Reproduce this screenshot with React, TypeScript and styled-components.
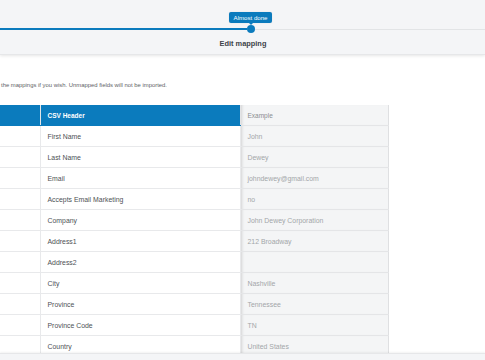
import React from 'react';
import styled, { createGlobalStyle } from 'styled-components';

const GlobalStyle = createGlobalStyle`
  html, body {
    margin: 0;
    padding: 0;
    background: #ffffff;
    font-family: "Liberation Sans", Arial, sans-serif;
    overflow: hidden;
  }
`;

const Page = styled.div`
  width: 485px;
  height: 360px;
  position: relative;
  overflow: hidden;
`;

const Header = styled.header`
  height: 55px;
  background: #f4f5f7;
  box-shadow: 0 1px 3px rgba(0, 0, 0, 0.1);
  border-bottom: 1px solid #e6e7e9;
  box-sizing: border-box;
  display: flex;
  flex-direction: column;
  padding-top: 25px;
`;

const Track = styled.div`
  position: relative;
  display: flex;
  align-items: center;
  height: 8px;
`;

const DoneLine = styled.div`
  width: 247px;
  height: 2px;
  background: #0b7bbd;
`;

const Dot = styled.div`
  width: 8px;
  height: 8px;
  border-radius: 50%;
  background: #0b7bbd;
  flex-shrink: 0;
`;

const TodoLine = styled.div`
  flex: 1;
  height: 1px;
  background: #e2e4e6;
`;

const Tooltip = styled.div`
  position: absolute;
  left: 229px;
  bottom: 10px;
  width: 43px;
  height: 11px;
  border-radius: 2px;
  background: #0b7bbd;
  color: #ffffff;
  font-size: 6.1px;
  line-height: 11px;
  text-align: center;
  box-shadow: 0 0 1px rgba(0, 0, 0, 0.2);

  &::after {
    content: '';
    position: absolute;
    left: 50%;
    bottom: -2px;
    margin-left: -2px;
    border-left: 2px solid transparent;
    border-right: 2px solid transparent;
    border-top: 2px solid #0b7bbd;
  }
`;

const Title = styled.div`
  margin-top: 6px;
  text-align: center;
  font-size: 7.4px;
  font-weight: 700;
  color: #3d4349;
  padding-left: 1px;
`;

const Content = styled.main`
  padding-top: 26px;
`;

const Note = styled.p`
  margin: 0 0 16px 1px;
  font-size: 5.9px;
  line-height: 8px;
  color: #5e6266;
`;

const Table = styled.table`
  border-collapse: collapse;
  table-layout: fixed;
  width: 388px;
`;

const HeadCell = styled.th<{ $example?: boolean }>`
  height: 20px;
  padding: 0 0 0 7px;
  text-align: left;
  font-size: 6.5px;
  font-weight: ${(p) => (p.$example ? 400 : 700)};
  color: ${(p) => (p.$example ? '#8a8d90' : '#ffffff')};
  background: ${(p) => (p.$example ? '#f4f5f6' : '#0b7bbd')};
  border-bottom: 1px solid ${(p) => (p.$example ? '#e4e5e7' : '#0b7bbd')};
  border-right: 1px solid ${(p) => (p.$example ? '#dfe0e2' : '#e3e4e6')};
  box-shadow: ${(p) => (p.$example ? 'inset 3px 0 3px -2px rgba(0,0,0,0.14)' : 'none')};
`;

const Cell = styled.td<{ $example?: boolean }>`
  height: 20px;
  padding: 0 0 0 7px;
  font-size: 6.9px;
  color: ${(p) => (p.$example ? '#a3a6a9' : '#4d5155')};
  background: ${(p) => (p.$example ? '#f4f5f6' : '#ffffff')};
  border-bottom: 1px solid ${(p) => (p.$example ? '#e4e5e7' : '#e8e9eb')};
  border-right: 1px solid ${(p) => (p.$example ? '#dfe0e2' : '#e8e9eb')};
  box-shadow: ${(p) => (p.$example ? 'inset 3px 0 3px -2px rgba(0,0,0,0.14)' : 'none')};
  white-space: nowrap;
`;

const Footer = styled.footer`
  position: absolute;
  left: 0;
  right: 0;
  bottom: 0;
  height: 6px;
  background: #f4f5f7;
  border-top: 1px solid #e6e7e9;
  box-shadow: 0 -1px 2px rgba(0, 0, 0, 0.05);
`;

const rows = [
  ['First Name', 'John'],
  ['Last Name', 'Dewey'],
  ['Email', 'johndewey@gmail.com'],
  ['Accepts Email Marketing', 'no'],
  ['Company', 'John Dewey Corporation'],
  ['Address1', '212 Broadway'],
  ['Address2', ''],
  ['City', 'Nashville'],
  ['Province', 'Tennessee'],
  ['Province Code', 'TN'],
  ['Country', 'United States'],
];

export default function App() {
  return (
    <Page>
      <GlobalStyle />
      <Header>
        <Track>
          <DoneLine />
          <Dot />
          <TodoLine />
          <Tooltip>Almost done</Tooltip>
        </Track>
        <Title>Edit mapping</Title>
      </Header>
      <Content>
        <Note>the mappings if you wish. Unmapped fields will not be imported.</Note>
        <Table>
          <colgroup>
            <col style={{ width: 40 }} />
            <col style={{ width: 200 }} />
            <col style={{ width: 148 }} />
          </colgroup>
          <thead>
            <tr>
              <HeadCell />
              <HeadCell>CSV Header</HeadCell>
              <HeadCell $example>Example</HeadCell>
            </tr>
          </thead>
          <tbody>
            {rows.map(([header, example]) => (
              <tr key={header}>
                <Cell />
                <Cell>{header}</Cell>
                <Cell $example>{example}</Cell>
              </tr>
            ))}
          </tbody>
        </Table>
      </Content>
      <Footer />
    </Page>
  );
}
